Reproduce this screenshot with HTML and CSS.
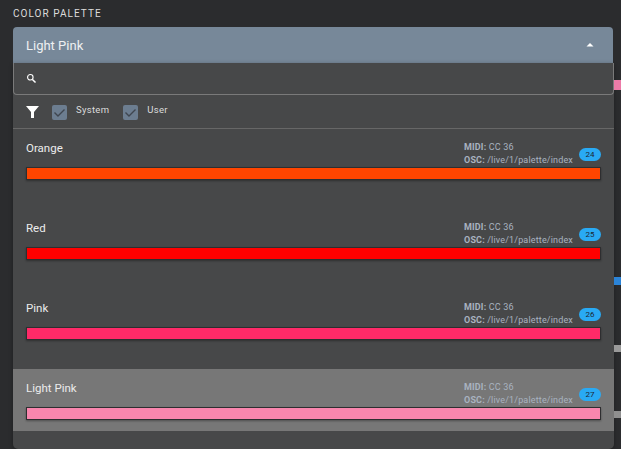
FILE: index.html
```html
<!DOCTYPE html>
<html lang="en">
<head>
    <meta charset="UTF-8">
    <meta name="viewport" content="width=device-width, initial-scale=1.0">
    <title>Color Palette</title>
    <link rel="stylesheet" href="styles.css">
</head>
<body>
    <div class="page">
        <div class="field">
            <div class="field-label">COLOR PALETTE</div>

            <div class="select">
                <span>Light Pink</span>
                <svg class="caret" width="10" height="6" viewBox="0 0 10 6"><path d="M1.5 4.5 L5 1 L8.5 4.5 Z" fill="#fff"/></svg>
            </div>

            <div class="panel">
                <div class="search">
                    <svg width="11" height="11" viewBox="0 0 12 12" fill="none" stroke="#fff">
                        <circle cx="4.7" cy="4.7" r="3" stroke-width="1.2"/>
                        <path d="M7 7 L10.4 10.4" stroke-width="1.6"/>
                    </svg>
                </div>

                <div class="filters">
                    <svg class="funnel" width="13" height="12" viewBox="0 0 13 12"><path d="M0 0 H13 L8 6 V12 H5 V6 Z" fill="#fff"/></svg>
                    <span class="check">
                        <svg width="15" height="15" viewBox="0 0 15 15" fill="none"><path d="M2.5 7.5 L6 11 L12.5 4.5" stroke="#3f4650" stroke-width="1.4"/></svg>
                    </span>
                    <span class="check-label">System</span>
                    <span class="check">
                        <svg width="15" height="15" viewBox="0 0 15 15" fill="none"><path d="M2.5 7.5 L6 11 L12.5 4.5" stroke="#3f4650" stroke-width="1.4"/></svg>
                    </span>
                    <span class="check-label">User</span>
                </div>

                <div class="item">
                    <div class="item-top">
                        <div class="item-name">Orange</div>
                        <div class="item-info">
                            <div><b>MIDI:</b> CC 36</div>
                            <div><b>OSC:</b> /live/1/palette/index</div>
                        </div>
                        <span class="badge">24</span>
                    </div>
                    <div class="swatch swatch-orange"></div>
                </div>

                <div class="item">
                    <div class="item-top">
                        <div class="item-name">Red</div>
                        <div class="item-info">
                            <div><b>MIDI:</b> CC 36</div>
                            <div><b>OSC:</b> /live/1/palette/index</div>
                        </div>
                        <span class="badge">25</span>
                    </div>
                    <div class="swatch swatch-red"></div>
                </div>

                <div class="item">
                    <div class="item-top">
                        <div class="item-name">Pink</div>
                        <div class="item-info">
                            <div><b>MIDI:</b> CC 36</div>
                            <div><b>OSC:</b> /live/1/palette/index</div>
                        </div>
                        <span class="badge">26</span>
                    </div>
                    <div class="swatch swatch-pink"></div>
                </div>

                <div class="item item-selected">
                    <div class="item-top">
                        <div class="item-name">Light Pink</div>
                        <div class="item-info">
                            <div><b>MIDI:</b> CC 36</div>
                            <div><b>OSC:</b> /live/1/palette/index</div>
                        </div>
                        <span class="badge">27</span>
                    </div>
                    <div class="swatch swatch-lightpink"></div>
                </div>
            </div>
        </div>

        <div class="behind">
            <div class="peek peek-pink"></div>
            <div class="peek peek-blue"></div>
            <div class="peek peek-grey-1"></div>
            <div class="peek peek-grey-2"></div>
        </div>
    </div>
</body>
</html>
```

FILE: styles.css
```css
html, body {
    height: 100%;
}

body {
    font-family: Roboto, sans-serif;
    margin: 0;
    background-color: #2b2c2e;
    color: #f2f2f2;
    overflow: hidden;
}

.page {
    display: flex;
    padding-left: 13px;
    height: 449px;
    overflow: hidden;
}

.field {
    width: 601px;
    flex-shrink: 0;
}

.field-label {
    height: 27px;
    line-height: 27px;
    font-size: 10px;
    letter-spacing: 1.05px;
    color: #dcdcdc;
}

.select {
    height: 36px;
    width: 600px;
    box-sizing: border-box;
    padding: 0 18px 0 13px;
    display: flex;
    justify-content: space-between;
    align-items: center;
    background-color: #778899;
    border-radius: 4px 4px 0 0;
    font-size: 13px;
    color: #eef0f2;
}

.panel {
    height: 384px;
    background-color: #474849;
    border-radius: 0 0 5px 5px;
    box-shadow: 0 1px 4px rgba(0, 0, 0, 0.3);
    padding-bottom: 2px;
}

.search {
    height: 32px;
    box-sizing: border-box;
    padding-left: 12px;
    display: flex;
    align-items: center;
    border: 1px solid #7a7a7a;
    border-top: none;
    border-radius: 0 0 4px 4px;
}

.filters {
    height: 34px;
    box-sizing: border-box;
    padding-left: 13px;
    display: flex;
    align-items: center;
    border-bottom: 1px solid #676767;
}

.funnel {
    margin-right: 13px;
}

.check {
    width: 15px;
    height: 15px;
    background-color: #6c7d90;
    border-radius: 2px;
    margin-top: 1px;
}

.check svg {
    display: block;
}

.check-label {
    font-size: 9.5px;
    letter-spacing: 0.3px;
    color: #dcdcdc;
    margin: -4px 14px 0 9px;
}

.item {
    height: 62px;
    box-sizing: border-box;
    margin-bottom: 18px;
    padding: 12px 13px 0;
}

.item-selected {
    background-color: #777777;
}

.item-top {
    display: flex;
    align-items: flex-start;
    height: 26px;
}

.item-name {
    flex: 1;
    font-size: 11.5px;
    line-height: 14px;
    color: #ececec;
}

.item-info {
    font-size: 9px;
    line-height: 13px;
    letter-spacing: 0.16px;
    color: #a9b3c0;
}

.item-info b {
    font-weight: 700;
}

.badge {
    width: 22px;
    height: 13px;
    line-height: 13px;
    margin: 7px 0 0 6px;
    background-color: #29aaf4;
    border-radius: 7px;
    text-align: center;
    font-size: 8px;
    color: #1d2733;
}

.swatch {
    height: 13px;
    width: 575px;
    box-sizing: border-box;
    border: 1px solid #2e2e30;
    box-shadow: 0 1px 2px rgba(0, 0, 0, 0.35);
}

.swatch-orange { background-color: #ff4500; }
.swatch-red { background-color: #ff0000; }
.swatch-pink { background-color: #ff2a68; }
.swatch-lightpink { background-color: #f986ae; }

.behind {
    flex: 1;
    min-width: 0;
}

.peek {
    height: 10px;
}

.peek-pink {
    margin-top: 80px;
    background-color: #ec7ba8;
}

.peek-blue {
    margin-top: 187px;
    height: 8px;
    background-color: #2b84d8;
}

.peek-grey-1 {
    margin-top: 60px;
    height: 7px;
    background-color: #9a9a9a;
}

.peek-grey-2 {
    margin-top: 59px;
    height: 7px;
    background-color: #8f8f8f;
}
```
